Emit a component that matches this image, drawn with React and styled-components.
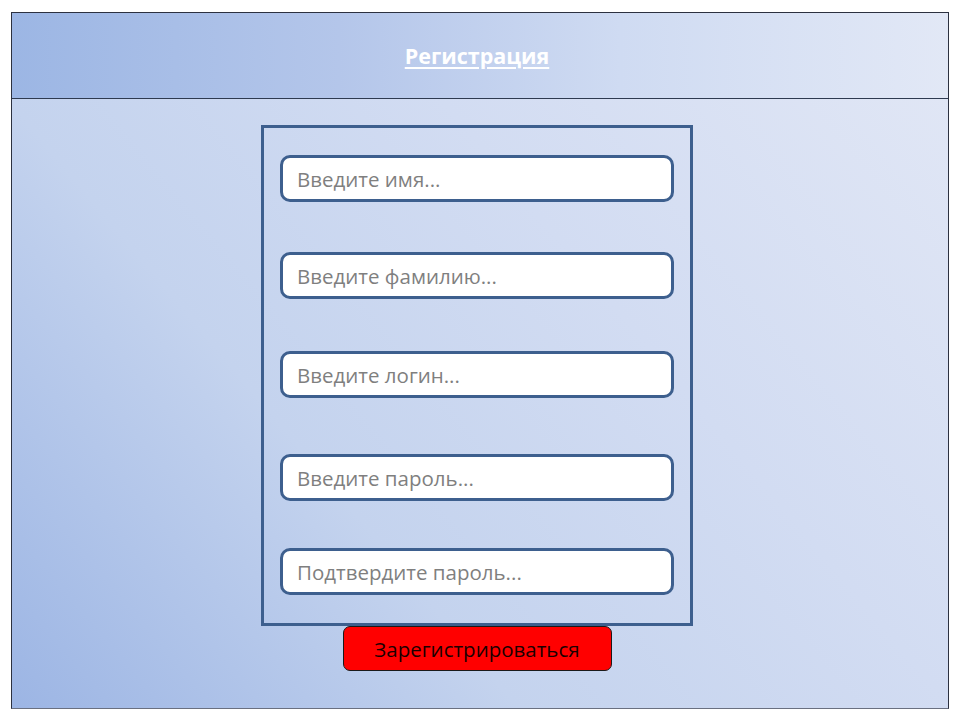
import React from "react";
import styled, { createGlobalStyle } from "styled-components";

const GlobalStyle = createGlobalStyle`
  html, body {
    margin: 0;
    padding: 0;
    background: #ffffff;
  }
  body {
    font-family: "Open Sans", "Noto Sans", sans-serif;
  }
`;

const fields = [
  { placeholder: "Введите имя...", gap: 0 },
  { placeholder: "Введите фамилию...", gap: 50 },
  { placeholder: "Введите логин...", gap: 52 },
  { placeholder: "Введите пароль...", gap: 56 },
  { placeholder: "Подтвердите пароль...", gap: 47 },
];

const App = () => {
  return (
    <>
      <GlobalStyle />
      <Page>
        <Frame>
          <Header>
            <Title>Регистрация</Title>
          </Header>
          <Body>
            <FormBox>
              {fields.map((f) => (
                <Field key={f.placeholder} $gap={f.gap} placeholder={f.placeholder} />
              ))}
            </FormBox>
            <SubmitButton>Зарегистрироваться</SubmitButton>
          </Body>
        </Frame>
      </Page>
    </>
  );
};

const Page = styled.div`
  width: 960px;
  height: 720px;
  padding: 12px 11px 11px 11px;
  box-sizing: border-box;
`;

const Frame = styled.div`
  width: 938px;
  height: 697px;
  box-sizing: border-box;
  border: 1px solid #2c3140;
  border-bottom-color: #6a7080;
  display: flex;
  flex-direction: column;
`;

const Header = styled.header`
  height: 85px;
  flex-shrink: 0;
  display: flex;
  align-items: center;
  justify-content: center;
  padding-right: 6px;
  border-bottom: 1px solid #2e3a50;
  background: linear-gradient(90deg, #9cb6e4 0%, #b4c6ea 35%, #cfdbf2 65%, #e2e8f6 100%);
`;

const Title = styled.h1`
  margin: 0;
  font-family: "Open Sans", sans-serif;
  font-size: 21.5px;
  font-weight: 700;
  color: #ffffff;
  text-decoration: underline;
  text-underline-offset: 3px;
  text-decoration-thickness: 2px;
`;

const Body = styled.main`
  flex: 1;
  display: flex;
  flex-direction: column;
  align-items: center;
  padding: 26px 6px 0 0;
  background: linear-gradient(50deg, #9cb5e4 0%, #c4d3ee 35%, #d2dcf2 65%, #e0e6f5 100%);
`;

const FormBox = styled.div`
  width: 432px;
  height: 501px;
  box-sizing: border-box;
  border: 3px solid #3d5f8e;
  padding: 27px 16px 0 16px;
  display: flex;
  flex-direction: column;
`;

const Field = styled.input`
  margin-top: ${(p) => p.$gap}px;
  height: 47px;
  width: 100%;
  box-sizing: border-box;
  border: 3px solid #3d5f8e;
  border-radius: 10px;
  background: #ffffff;
  padding: 0 14px;
  font-family: "Open Sans", sans-serif;
  font-size: 20.5px;
  color: #333;
  outline: none;

  &::placeholder {
    color: #7f7f7f;
  }
`;

const SubmitButton = styled.button`
  width: 269px;
  height: 45px;
  box-sizing: border-box;
  border: 1px solid #1a1a1a;
  border-radius: 7px;
  background: #ff0000;
  color: #1a0000;
  font-family: "Open Sans", sans-serif;
  font-size: 20.5px;
  cursor: pointer;
`;

export default App;
